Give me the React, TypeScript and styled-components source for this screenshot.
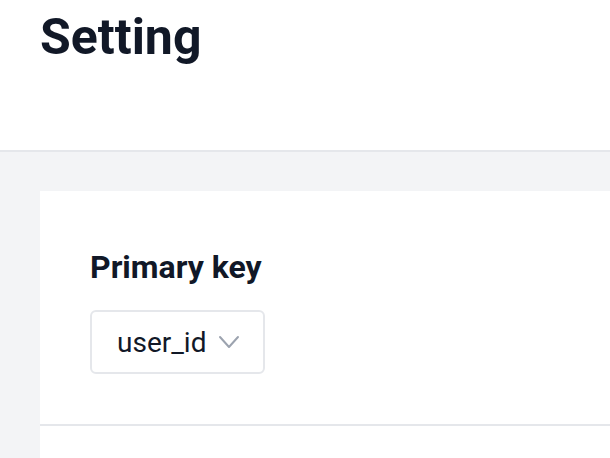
import React from "react";
import styled, { createGlobalStyle } from "styled-components";

const Global = createGlobalStyle`
  html, body { margin: 0; padding: 0; background: #f3f4f6; }
  body { font-family: Roboto, "Liberation Sans", sans-serif; color: #111827; overflow: hidden; }
  * { box-sizing: border-box; }
`;

const Page = styled.div`
  display: flex;
  flex-direction: column;
  height: 458px;
  overflow: hidden;
`;

const Header = styled.header`
  background: #ffffff;
  height: 152px;
  flex-shrink: 0;
  border-bottom: 2px solid #e5e7eb;
  padding: 7px 40px 0;
`;

const Title = styled.h1`
  margin: 0;
  font-size: 50px;
  font-weight: 700;
  line-height: 60px;
  color: #111827;
`;

const Main = styled.main`
  padding: 39px 0 0 40px;
  flex: 1;
  display: flex;
  flex-direction: column;
`;

const Card = styled.section`
  background: #ffffff;
  flex: 1;
`;

const Section = styled.div`
  padding: 56px 50px 50px;
  border-bottom: 2px solid #e5e7eb;
  display: flex;
  flex-direction: column;
  align-items: flex-start;
  gap: 23px;
`;

const Label = styled.h2`
  margin: 0;
  font-size: 32px;
  font-weight: 700;
  line-height: 40px;
  color: #111827;
`;

const Select = styled.button`
  display: flex;
  align-items: center;
  gap: 12px;
  height: 64px;
  padding: 0 23px 0 25px;
  background: #ffffff;
  border: 2px solid #e5e7eb;
  border-radius: 6px;
  font-family: inherit;
  font-size: 28px;
  color: #111827;
`;

const Chevron = styled.svg`
  width: 22px;
  height: 14px;
  color: #9ca3af;
`;

export default function App() {
  return (
    <Page>
      <Global />
      <Header>
        <Title>Setting</Title>
      </Header>
      <Main>
        <Card>
          <Section>
            <Label>Primary key</Label>
            <Select>
              user_id
              <Chevron viewBox="0 0 22 14" fill="none">
                <path d="M2 2l9 10 9-10" stroke="currentColor" strokeWidth="2" strokeLinecap="round" strokeLinejoin="round" />
              </Chevron>
            </Select>
          </Section>
        </Card>
      </Main>
    </Page>
  );
}
